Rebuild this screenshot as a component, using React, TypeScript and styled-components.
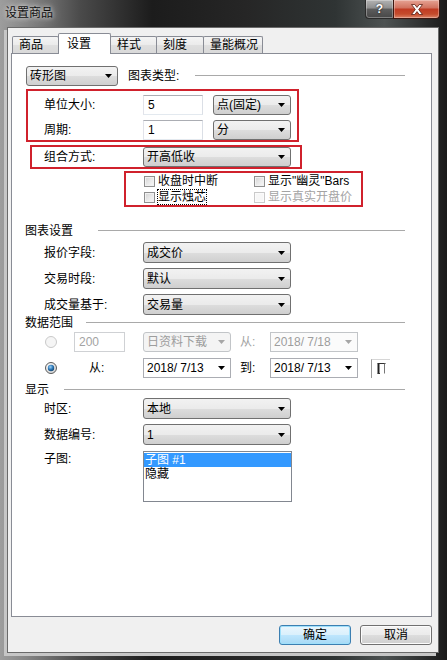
import React from 'react';
import styled, { createGlobalStyle } from 'styled-components';

const GlobalStyle = createGlobalStyle`
  html, body {
    margin: 0;
    padding: 0;
  }
  body {
    width: 447px;
    height: 660px;
    overflow: hidden;
    background: #1b1b1b;
    font-family: "Liberation Sans", "Noto Sans CJK SC", sans-serif;
    font-size: 12px;
    color: #000;
  }
`;

const Window = styled.div`
  width: 447px;
  height: 660px;
  box-sizing: border-box;
  display: flex;
  flex-direction: column;
  padding: 0 9px 8px 8px;
  background: linear-gradient(
    90deg,
    #9d9d9d 0%,
    #858585 6%,
    #4a4a4a 18%,
    #1c1c1c 34%,
    #262626 55%,
    #2f3434 75%,
    #4d5252 86%,
    #1a1a1a 100%
  );
`;

const TitleBar = styled.div`
  height: 28px;
  flex-shrink: 0;
  display: flex;
  align-items: flex-start;
  justify-content: space-between;
  margin: 0 -2px 0 -3px;
`;

const Caption = styled.div`
  padding-top: 6px;
  line-height: 14px;
  color: #111;
  text-shadow: 0 0 4px #e6e6e6, 0 0 8px #d0d0d0;
`;

const CaptionButtons = styled.div`
  display: flex;
  height: 19px;
`;

const HelpButton = styled.div`
  width: 28px;
  height: 19px;
  box-sizing: border-box;
  display: flex;
  align-items: center;
  justify-content: center;
  border: 1px solid #2a2a2a;
  border-top: none;
  border-right: none;
  border-radius: 0 0 0 4px;
  background: linear-gradient(#b3b3b3 0%, #8e8e8e 45%, #5d5d5d 50%, #474747 100%);
  box-shadow: inset 0 0 0 1px rgba(255, 255, 255, 0.3);
  color: #fff;
  font-weight: bold;
  font-size: 12px;
  text-shadow: 0 0 2px #000;
`;

const CloseButton = styled.div`
  width: 47px;
  height: 19px;
  box-sizing: border-box;
  display: flex;
  align-items: center;
  justify-content: center;
  border: 1px solid #3d1710;
  border-top: none;
  border-radius: 0 0 4px 0;
  background: linear-gradient(#e6a394 0%, #d27461 42%, #c13c24 52%, #c54b2c 78%, #dc8266 100%);
  box-shadow: inset 0 0 0 1px rgba(255, 255, 255, 0.3);
`;

const Client = styled.div`
  flex: 1;
  display: flex;
  flex-direction: column;
  padding: 5px 6px 0 3px;
  background: #f0f0f0;
  box-shadow: 0 0 0 1px #6a6a6a, -3px 3px 0 1px #c6c6c6;
`;

const TabStrip = styled.div`
  display: flex;
  align-items: flex-start;
  height: 21px;
  padding-left: 2px;
  margin-bottom: -1px;
  position: relative;
  z-index: 1;
`;

const Tab = styled.div<{ $w: number; $active?: boolean }>`
  width: ${p => p.$w}px;
  height: ${p => (p.$active ? 21 : 17)}px;
  margin-top: ${p => (p.$active ? 0 : 3)}px;
  margin-left: -1px;
  box-sizing: border-box;
  flex-shrink: 0;
  padding: ${p => (p.$active ? '4px 0 0 8px' : '2px 0 0 6px')};
  line-height: 13px;
  border: 1px solid #898c95;
  border-bottom: none;
  border-radius: 2px 2px 0 0;
  background: ${p =>
    p.$active ? '#fff' : 'linear-gradient(#f4f4f4 0%, #ebebeb 50%, #dfdfdf 51%, #d9d9d9 100%)'};
  position: relative;
  z-index: ${p => (p.$active ? 2 : 1)};
`;

const Panel = styled.div`
  height: 564px;
  box-sizing: border-box;
  display: flex;
  flex-direction: column;
  padding: 12px 26px 0 14px;
  background: #fff;
  border: 1px solid #898c95;
`;

const Row = styled.div<{ $h?: number; $mt?: number; $pl?: number; $top?: boolean }>`
  display: flex;
  align-items: ${p => (p.$top ? 'flex-start' : 'center')};
  height: ${p => p.$h ?? 20}px;
  margin-top: ${p => p.$mt ?? 0}px;
  padding-left: ${p => p.$pl ?? 0}px;
  flex-shrink: 0;
`;

const Label = styled.span<{ $w?: number; $off?: boolean; $pt?: number }>`
  width: ${p => (p.$w ? `${p.$w}px` : 'auto')};
  flex-shrink: 0;
  line-height: 14px;
  padding-top: ${p => p.$pt ?? 0}px;
  color: ${p => (p.$off ? '#a3a3a3' : '#000')};
  white-space: nowrap;
`;

const Rule = styled.div<{ $ml: number }>`
  flex: 1;
  height: 0;
  margin: -2px 0 0 ${p => p.$ml}px;
  border-top: 1px solid #a9a9a9;
`;

const SectionTitle = styled.div<{ $mt: number }>`
  display: flex;
  align-items: center;
  height: 14px;
  margin: ${p => p.$mt}px 0 0 -1px;
  flex-shrink: 0;
  line-height: 14px;
`;

const Marked = styled.div<{ $ml?: number; $w: number; $pad: string; $mt: number }>`
  width: ${p => p.$w}px;
  box-sizing: border-box;
  margin: ${p => p.$mt}px 0 0 ${p => p.$ml ?? 0}px;
  padding: ${p => p.$pad};
  border: 2px solid #d0212c;
  display: flex;
  flex-direction: column;
  gap: 5px;
  flex-shrink: 0;
`;

const CheckGrid = styled.div`
  display: grid;
  grid-template-columns: 110px auto;
  grid-auto-rows: 16px;
  align-items: center;
`;

const ComboBox = styled.div<{ $w: number; $h: number; $off?: boolean; $field?: boolean }>`
  width: ${p => p.$w}px;
  height: ${p => p.$h}px;
  box-sizing: border-box;
  flex-shrink: 0;
  display: flex;
  align-items: center;
  justify-content: space-between;
  padding: 0 5px 0 3px;
  line-height: 14px;
  white-space: nowrap;
  border: 1px solid ${p => (p.$off ? '#c2c5c8' : p.$field ? '#abadb3' : '#707070')};
  border-radius: ${p => (p.$field ? 0 : 3)}px;
  color: ${p => (p.$off ? '#9d9d9d' : '#000')};
  background: ${p =>
    p.$field
      ? p.$off
        ? '#fbfbfb'
        : '#fff'
      : p.$off
        ? '#f4f4f4'
        : 'linear-gradient(#f2f2f2 0%, #ebebeb 50%, #dddddd 51%, #cfcfcf 100%)'};
`;

const TextBox = styled.div<{ $w: number; $off?: boolean }>`
  width: ${p => p.$w}px;
  height: 20px;
  box-sizing: border-box;
  flex-shrink: 0;
  display: flex;
  align-items: center;
  padding-left: 4px;
  line-height: 14px;
  border: 1px solid;
  border-color: ${p => (p.$off ? '#cfd1d4' : '#abadb3 #dbdfe6 #e3e9ef #e2e3ea')};
  background: #fff;
  color: ${p => (p.$off ? '#a3a3a3' : '#000')};
`;

const CheckItem = styled.div<{ $off?: boolean }>`
  display: flex;
  align-items: center;
  gap: 3px;
  line-height: 14px;
  white-space: nowrap;
  color: ${p => (p.$off ? '#a3a3a3' : '#000')};
`;

const Box = styled.span<{ $off?: boolean }>`
  width: 11px;
  height: 11px;
  box-sizing: border-box;
  flex-shrink: 0;
  border: 1px solid ${p => (p.$off ? '#cacaca' : '#8f8f8f')};
  background: ${p => (p.$off ? '#f7f7f7' : 'linear-gradient(135deg, #d3d3d3 0%, #ececec 60%, #f8f8f8 100%)')};
  box-shadow: inset 0 0 0 1px ${p => (p.$off ? '#fbfbfb' : '#f1f1f1')};
`;

const FocusText = styled.span`
  outline: 1px dotted #000;
  outline-offset: 0;
`;

const RangeRow = styled.div<{ $mt: number }>`
  display: grid;
  grid-template-columns: 29px 69px 88px 39px 88px 13px 19px;
  align-items: center;
  height: 20px;
  margin-top: ${p => p.$mt}px;
  padding-left: 19px;
  flex-shrink: 0;
`;

const Indented = styled.div<{ $pl: number }>`
  padding-left: ${p => p.$pl}px;
`;

const PickButton = styled.div`
  width: 19px;
  height: 19px;
  box-sizing: border-box;
  display: flex;
  align-items: center;
  justify-content: center;
  border-left: 1px solid #9a9a9a;
  border-top: 1px solid #d6d6d6;
`;

const ListBox = styled.div`
  width: 149px;
  height: 51px;
  box-sizing: border-box;
  flex-shrink: 0;
  border: 1px solid #828790;
  background: #fff;
  padding-top: 1px;
`;

const ListItem = styled.div<{ $selected?: boolean }>`
  height: 14px;
  line-height: 14px;
  padding-left: 1px;
  background: ${p => (p.$selected ? '#3399ff' : 'transparent')};
  color: ${p => (p.$selected ? '#fff' : '#000')};
`;

const ButtonRow = styled.div`
  display: flex;
  justify-content: flex-end;
  gap: 9px;
  margin-top: 8px;
`;

const PushButton = styled.div<{ $default?: boolean }>`
  width: 72px;
  height: 20px;
  box-sizing: border-box;
  display: flex;
  align-items: center;
  justify-content: center;
  line-height: 14px;
  border: 1px solid ${p => (p.$default ? '#3c7fb1' : '#707070')};
  border-radius: 3px;
  background: ${p =>
    p.$default
      ? 'linear-gradient(#eaf6fd 0%, #d9f0fc 50%, #bee6fd 51%, #a7d9f5 100%)'
      : 'linear-gradient(#f2f2f2 0%, #ebebeb 50%, #dddddd 51%, #cfcfcf 100%)'};
  box-shadow: inset 0 0 0 1px ${p => (p.$default ? '#9fe0fb' : '#fcfcfc')};
`;

const Arrow = ({ off }: { off?: boolean }) => (
  <svg width="7" height="4" viewBox="0 0 7 4">
    <path d="M0 0H7L3.5 4Z" fill={off ? '#a6a6a6' : '#000'} />
  </svg>
);

type SelectProps = { w: number; h?: number; value: string; off?: boolean; field?: boolean };

const Select = ({ w, h = 20, value, off, field }: SelectProps) => (
  <ComboBox $w={w} $h={h} $off={off} $field={field}>
    <span>{value}</span>
    <Arrow off={off} />
  </ComboBox>
);

const Radio = ({ on, off }: { on?: boolean; off?: boolean }) => (
  <svg width="12" height="12" viewBox="0 0 12 12">
    <defs>
      <radialGradient id="radioRing" cx="35%" cy="35%" r="75%">
        <stop offset="0%" stopColor="#ffffff" />
        <stop offset="100%" stopColor="#d0d0d0" />
      </radialGradient>
      <radialGradient id="radioDot" cx="40%" cy="35%" r="70%">
        <stop offset="0%" stopColor="#9fd3f7" />
        <stop offset="55%" stopColor="#2c78b8" />
        <stop offset="100%" stopColor="#103f69" />
      </radialGradient>
    </defs>
    <circle
      cx="6"
      cy="6"
      r="5.5"
      fill={off ? '#f5f5f5' : 'url(#radioRing)'}
      stroke={off ? '#c8c8c8' : '#5b5b5b'}
    />
    {on && <circle cx="6" cy="6" r="3.2" fill="url(#radioDot)" />}
  </svg>
);

const CloseGlyph = () => (
  <svg width="14" height="11" viewBox="0 0 14 11">
    <path
      d="M1.5 0.5H4.8L7 3.4L9.2 0.5H12.5L8.7 5.5L12.5 10.5H9.2L7 7.6L4.8 10.5H1.5L5.3 5.5Z"
      fill="#fff"
      stroke="#5a1d12"
      strokeWidth="0.8"
    />
  </svg>
);

const PickGlyph = () => (
  <svg width="9" height="11" viewBox="0 0 9 11">
    <path d="M0.5 0.5H8.5" stroke="#333" strokeWidth="1" />
    <path d="M1.5 0.5V10.5" stroke="#222" strokeWidth="2" />
    <path d="M7.5 0.5V10.5" stroke="#777" strokeWidth="1" />
    <path d="M0.5 10.5H3" stroke="#333" strokeWidth="1" />
  </svg>
);

const tabs = [
  { name: '商品', w: 47 },
  { name: '设置', w: 53, active: true },
  { name: '样式', w: 47 },
  { name: '刻度', w: 48 },
  { name: '量能概况', w: 60 },
];

const chartRows = [
  { label: '报价字段:', value: '成交价' },
  { label: '交易时段:', value: '默认' },
  { label: '成交量基于:', value: '交易量' },
];

export default function App() {
  return (
    <>
      <GlobalStyle />
      <Window>
        <TitleBar>
          <Caption>设置商品</Caption>
          <CaptionButtons>
            <HelpButton>?</HelpButton>
            <CloseButton>
              <CloseGlyph />
            </CloseButton>
          </CaptionButtons>
        </TitleBar>

        <Client>
          <div>
            <TabStrip>
              {tabs.map(t => (
                <Tab key={t.name} $w={t.w} $active={t.active}>
                  {t.name}
                </Tab>
              ))}
            </TabStrip>

            <Panel>
              <Row>
                <Select w={92} value="砖形图" />
                <Label style={{ marginLeft: 10 }}>图表类型:</Label>
                <Rule $ml={16} />
              </Row>

              <Marked $w={273} $mt={3} $pad="4px 0 0 16px">
                <Row>
                  <Label $w={99}>单位大小:</Label>
                  <TextBox $w={60}>5</TextBox>
                  <span style={{ width: 10 }} />
                  <Select w={78} value="点(固定)" />
                </Row>
                <Row>
                  <Label $w={99}>周期:</Label>
                  <TextBox $w={60}>1</TextBox>
                  <span style={{ width: 10 }} />
                  <Select w={78} value="分" />
                </Row>
              </Marked>

              <Marked $w={272} $ml={4} $mt={3} $pad="0 0 0 12px">
                <Row>
                  <Label $w={99}>组合方式:</Label>
                  <Select w={148} value="开高低收" />
                </Row>
              </Marked>

              <Marked $w={239} $ml={98} $mt={2} $pad="0 0 0 18px">
                <CheckGrid>
                  <CheckItem>
                    <Box />
                    收盘时中断
                  </CheckItem>
                  <CheckItem>
                    <Box />
                    显示"幽灵"Bars
                  </CheckItem>
                  <CheckItem>
                    <Box />
                    <FocusText>显示烛芯</FocusText>
                  </CheckItem>
                  <CheckItem $off>
                    <Box $off />
                    显示真实开盘价
                  </CheckItem>
                </CheckGrid>
              </Marked>

              <SectionTitle $mt={17}>
                图表设置
                <Rule $ml={25} />
              </SectionTitle>

              {chartRows.map((r, i) => (
                <Row key={r.label} $h={21} $mt={i === 0 ? 4 : 5} $pl={18}>
                  <Label $w={99}>{r.label}</Label>
                  <Select w={148} h={21} value={r.value} />
                </Row>
              ))}

              <SectionTitle $mt={1}>
                数据范围
                <Rule $ml={13} />
              </SectionTitle>

              <RangeRow $mt={2}>
                <Radio off />
                <TextBox $w={51} $off>
                  200
                </TextBox>
                <Select w={88} value="日资料下载" off />
                <Indented $pl={9}>
                  <Label $off>从:</Label>
                </Indented>
                <Select w={88} value="2018/ 7/18" off field />
                <span />
                <span />
              </RangeRow>

              <RangeRow $mt={6}>
                <Radio on />
                <Indented $pl={15}>
                  <Label>从:</Label>
                </Indented>
                <Select w={88} value="2018/ 7/13" field />
                <Indented $pl={9}>
                  <Label>到:</Label>
                </Indented>
                <Select w={88} value="2018/ 7/13" field />
                <span />
                <PickButton>
                  <PickGlyph />
                </PickButton>
              </RangeRow>

              <SectionTitle $mt={5}>
                显示
                <Rule $ml={15} />
              </SectionTitle>

              <Row $h={21} $mt={1} $pl={18}>
                <Label $w={99}>时区:</Label>
                <Select w={148} h={21} value="本地" />
              </Row>
              <Row $h={21} $mt={5} $pl={18}>
                <Label $w={99}>数据编号:</Label>
                <Select w={148} h={21} value="1" />
              </Row>
              <Row $h={51} $mt={6} $pl={18} $top>
                <Label $w={99} $pt={1}>
                  子图:
                </Label>
                <ListBox>
                  <ListItem $selected>子图 #1</ListItem>
                  <ListItem>隐藏</ListItem>
                </ListBox>
              </Row>
            </Panel>
          </div>

          <ButtonRow>
            <PushButton $default>确定</PushButton>
            <PushButton>取消</PushButton>
          </ButtonRow>
        </Client>
      </Window>
    </>
  );
}
